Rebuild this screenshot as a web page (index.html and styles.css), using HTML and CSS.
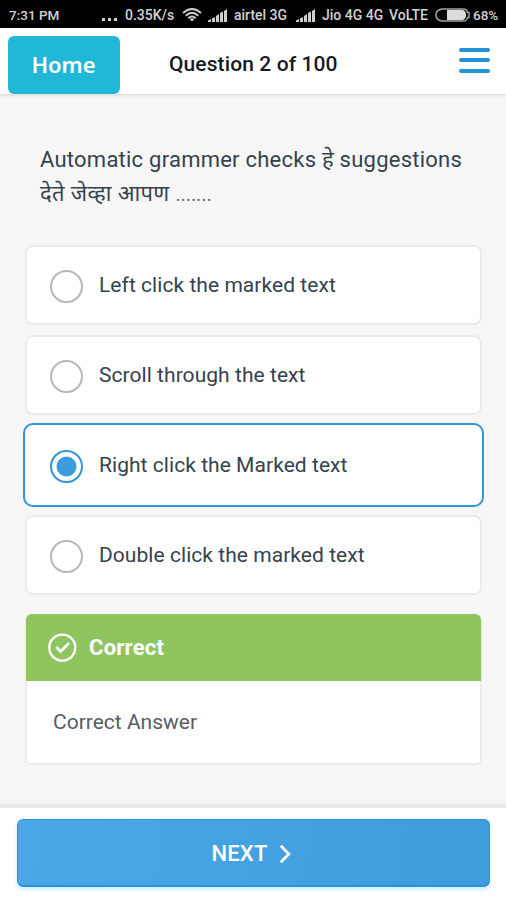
FILE: index.html
```
<!DOCTYPE html>
<html lang="en">
    <head>
        <meta charset="utf-8">
        <title>Question 2 of 100</title>
        <link rel="stylesheet" href="styles.css">
    </head>
    <body>
        <div id="statusbar">
            <span class="time">7:31 PM</span>
            <span class="dots"><i></i><i></i><i></i></span>
            <span class="speed">0.35K/s</span>
            <svg class="wifi" width="20" height="14" viewBox="0 0 20 14" fill="none" stroke="#cfcfcf" stroke-width="1.9">
                <path d="M1 5Q10-3 19 5M3.7 7.7Q10 2 16.3 7.7M6.3 10.2Q10 7 13.7 10.2"/>
                <path d="M7.7 11.2L10 13.5L12.3 11.2Q10 9.5 7.7 11.2Z" fill="#cfcfcf" stroke="none"/>
            </svg>
            <svg class="signal" width="20" height="13" viewBox="0 0 20 13" fill="#cfcfcf">
                <path d="M0 13V11.5L3 10V13ZM4 13V9.5L7 8V13ZM8 13V7L11 5V13ZM12 13V4L15 2.5V13ZM16 13V2L19 0V13Z"/>
            </svg>
            <span class="carrier">airtel 3G</span>
            <svg class="signal" width="20" height="13" viewBox="0 0 20 13" fill="#cfcfcf">
                <path d="M0 13V11.5L3 10V13ZM4 13V9.5L7 8V13ZM8 13V7L11 5V13ZM12 13V4L15 2.5V13ZM16 13V2L19 0V13Z"/>
            </svg>
            <span class="carrier2">Jio 4G 4G</span>
            <span class="volte">VoLTE</span>
            <svg class="battery" width="35" height="14" viewBox="0 0 35 14">
                <path d="M7 1H28Q32 1 32.5 4.5H34V9.5H32.5Q32 13 28 13H7Q1 12 1 7Q1 2 7 1Z" fill="#000" stroke="#a5a5a5" stroke-width="1.5"/>
                <path d="M12 2H28Q31 3 31 7Q31 11 28 12H12Z" fill="#dcdcdc"/>
            </svg>
            <span class="percent">68%</span>
        </div>
        <div id="header">
            <a class="home" href="#">Home</a>
            <span class="title">Question 2 of 100</span>
            <div class="menu"><i></i><i></i><i></i></div>
        </div>
        <div id="content">
            <div class="question">Automatic grammer checks हे suggestions <span class="line2">देते जेव्हा आपण <span class="ellipsis">.......</span></span></div>
            <div class="options">
                <div class="option"><span class="radio"></span><span class="label">Left click the marked text</span></div>
                <div class="option"><span class="radio"></span><span class="label">Scroll through the text</span></div>
                <div class="option selected"><span class="radio"></span><span class="label">Right click the Marked text</span></div>
                <div class="option"><span class="radio"></span><span class="label">Double click the marked text</span></div>
            </div>
            <div class="result">
                <div class="result-title">
                    <svg width="30" height="30" viewBox="0 0 30 30" fill="none" stroke="#fff" stroke-width="2.4">
                        <circle cx="15.3" cy="14.6" r="13"/>
                        <path d="M9.3 14.1L13.5 18.4L22 9.9" stroke-width="2.8"/>
                    </svg>
                    <span>Correct</span>
                </div>
                <div class="result-text">Correct Answer</div>
            </div>
        </div>
        <div id="footer">
            <div class="next">
                <span>NEXT</span>
                <svg width="12" height="20" viewBox="0 0 12 20" fill="none" stroke="#fff" stroke-width="2.8">
                    <path d="M1.8 1.8L9.8 10L1.8 18.2"/>
                </svg>
            </div>
        </div>
    </body>
</html>
```
FILE: styles.css
```
* {
    box-sizing: border-box;
}
body {
    background: #f6f6f6;
    font-family: Roboto, "Noto Sans", sans-serif;
    color: #35424e;
    width: 506px;
    height: 900px;
    margin: 0;
    display: flex;
    flex-direction: column;
    overflow: hidden;
}
#statusbar {
    background: #000;
    color: #d2d2d2;
    height: 28px;
    flex: none;
    display: flex;
    align-items: center;
    padding: 2px 8px 0 9px;
    font-size: 14px;
    font-weight: 500;
    white-space: nowrap;
}
#statusbar span, #statusbar svg {
    flex: none;
}
.time {
    width: 93px;
    font-size: 13.5px;
}
.dots {
    display: flex;
    gap: 3px;
    width: 23px;
    padding-top: 8px;
}
.dots i {
    background: #d2d2d2;
    width: 3px;
    height: 3px;
}
.speed {
    width: 57px;
}
.wifi {
    margin-right: 6px;
}
.signal {
    margin-right: 6px;
}
.carrier {
    width: 62px;
}
.carrier2 {
    width: 67px;
}
.volte {
    width: 46px;
}
.battery {
    margin-right: 3px;
}
.percent {
    font-size: 13.5px;
}
#header {
    background: #fff;
    height: 66px;
    flex: none;
    display: flex;
    align-items: center;
    padding: 8px 16px 0 8px;
    box-shadow: 0 1px 3px rgba(0,0,0,0.14);
}
.home {
    background: #20b8d6;
    color: #fff;
    width: 112px;
    height: 58px;
    line-height: 57px;
    padding-right: 1px;
    border-radius: 6px;
    font-family: "Noto Sans", sans-serif;
    font-size: 22px;
    font-weight: 600;
    text-align: center;
    text-decoration: none;
}
.title {
    color: #17191d;
    font-size: 21px;
    font-weight: 500;
    letter-spacing: 0.1px;
    margin-left: 49px;
    padding-bottom: 3px;
}
.menu {
    width: 31px;
    height: 25px;
    display: flex;
    flex-direction: column;
    justify-content: space-between;
    margin: 0 0 10px auto;
}
.menu i {
    background: #2492d8;
    height: 4px;
    border-radius: 2px;
}
#content {
    flex: 1;
    padding: 49px 24px 0 25px;
}
.question {
    height: 102px;
    padding-left: 15px;
    font-size: 22px;
    letter-spacing: 0.24px;
    line-height: 34px;
    white-space: nowrap;
}
.line2 {
    display: block;
    letter-spacing: 0.35px;
}
.ellipsis {
    font-size: 20px;
    letter-spacing: -0.1px;
    color: #69737c;
}
.options {
    display: flex;
    flex-direction: column;
    gap: 10px;
}
.option {
    background: #fff;
    height: 80px;
    border: 2px solid #ebebeb;
    border-radius: 8px;
    display: flex;
    align-items: center;
    padding-left: 23px;
}
.option.selected {
    height: 84px;
    margin: -2px;
    padding-left: 25px;
    border-color: #3195da;
    border-radius: 10px;
}
.radio {
    width: 33px;
    height: 33px;
    border: 2px solid #b4b8ba;
    border-radius: 50%;
    margin: 2px 16px 0 0;
}
.selected .radio {
    border-color: #3195da;
    background: radial-gradient(circle, #3a9ddf 9.5px, #fff 10.3px);
}
.label {
    font-size: 21px;
    letter-spacing: 0.05px;
    padding-bottom: 1px;
}
.result {
    background: #fff;
    height: 151px;
    margin-top: 19px;
    border: 2px solid #ebebeb;
    border-top: 0;
    border-radius: 6px;
}
.result-title {
    background: #8fc55f;
    color: #fff;
    height: 67px;
    margin: 0 -1px;
    border-radius: 6px 6px 0 0;
    display: flex;
    align-items: center;
    gap: 12px;
    padding-left: 21px;
    font-size: 22px;
    font-weight: 700;
    letter-spacing: 0.25px;
}
.result-text {
    color: #555d66;
    padding-left: 26px;
    font-size: 21px;
    line-height: 82px;
}
#footer {
    background: #fff;
    height: 96px;
    flex: none;
    border-top: 4px solid #e9e9e9;
    padding: 11px 16px 0 17px;
}
.next {
    background: linear-gradient(100deg, #4aa8e8, #3f9cdc);
    color: #fff;
    height: 68px;
    border: 1px solid #2496dc;
    border-bottom-width: 2px;
    border-radius: 6px;
    box-shadow: 0 3px 5px #d5effc;
    display: flex;
    align-items: center;
    justify-content: center;
    gap: 11px;
    padding: 2px 5px 0 0;
    font-size: 22px;
    font-weight: 500;
    letter-spacing: 0.2px;
}
```
